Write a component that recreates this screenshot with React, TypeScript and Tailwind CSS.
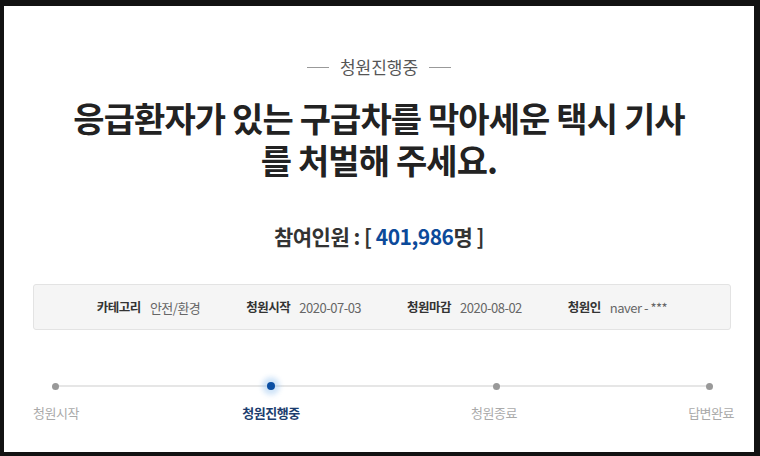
const font = { fontFamily: '"Noto Sans CJK KR", "Noto Sans", sans-serif' };

const infoItems = [
  { label: "카테고리", value: "안전/환경" },
  { label: "청원시작", value: "2020-07-03" },
  { label: "청원마감", value: "2020-08-02" },
  { label: "청원인", value: "naver - ***" },
];

const InfoBox = () => (
  <div className="ml-[29px] mt-[34px] flex h-[46px] w-[698px] items-center justify-center gap-[46px] rounded-[3px] border border-[#e3e3e3] bg-[#f5f5f5]">
    {infoItems.map((item) => (
      <div key={item.label} className="flex items-center gap-[9px] leading-none tracking-[-0.5px]">
        <span className="text-[12.5px] font-bold text-[#333]">{item.label}</span>
        <span className="text-[13px] text-[#666]">{item.value}</span>
      </div>
    ))}
  </div>
);

const Dot = ({ active }: { active?: boolean }) =>
  active ? (
    <div className="relative z-10 flex h-[20px] w-[20px] items-center justify-center">
      <div className="h-[8px] w-[8px] rounded-full bg-[#0b4fa3] shadow-[0_0_5px_5px_rgba(150,195,240,0.45)]" />
    </div>
  ) : (
    <div className="relative z-10 flex h-[20px] w-[20px] items-center justify-center">
      <div className="h-[7px] w-[7px] rounded-full bg-[#999]" />
    </div>
  );

const Timeline = () => (
  <div className="mt-[46px]">
    <div className="relative ml-[41px] flex h-[20px] items-center">
      <div className="absolute left-[10px] top-[9px] h-[2px] w-[654px] bg-[#e6e6e6]" />
      <Dot />
      <div className="w-[196px]" />
      <Dot active />
      <div className="w-[205px]" />
      <Dot />
      <div className="w-[193px]" />
      <Dot />
    </div>
    <div className="mt-[8px] flex h-[18px] items-center text-[13px] leading-[18px] tracking-[-0.5px]">
      <div className="ml-[29px] w-[48px] whitespace-nowrap text-[#aaa]">청원시작</div>
      <div className="ml-[155px] w-[70px] whitespace-nowrap text-center font-bold text-[#1c3d6e]">청원진행중</div>
      <div className="ml-[160px] w-[56px] whitespace-nowrap text-center text-[#aaa]">청원종료</div>
      <div className="ml-[152px] w-[60px] whitespace-nowrap text-right text-[#aaa]">답변완료</div>
    </div>
  </div>
);

export default function App() {
  return (
    <div className="h-[456px] w-[760px] overflow-hidden bg-[#121212] pl-[4px] pt-[6px]" style={font}>
      <div className="h-[446px] w-[750px] bg-white pt-[51px]">
        <div className="flex h-[20px] items-center justify-center gap-[11px] text-[17px] leading-[20px] text-[#555]">
          <div className="h-px w-[22px] bg-[#999]" />
          <span>청원진행중</span>
          <div className="h-px w-[22px] bg-[#999]" />
        </div>
        <h1 className="mt-[20px] text-center text-[34px] font-bold leading-[42px] tracking-[-0.9px] text-[#222]">
          <div>응급환자가 있는 구급차를 막아세운 택시 기사</div>
          <div>를 처벌해 주세요.</div>
        </h1>
        <div className="mt-[41px] text-center text-[21px] font-bold leading-[28px] tracking-[-0.5px] text-[#333]">
          참여인원 : [ <span className="text-[#0c4a9a]">401,986</span>명 ]
        </div>
        <InfoBox />
        <Timeline />
      </div>
    </div>
  );
}
